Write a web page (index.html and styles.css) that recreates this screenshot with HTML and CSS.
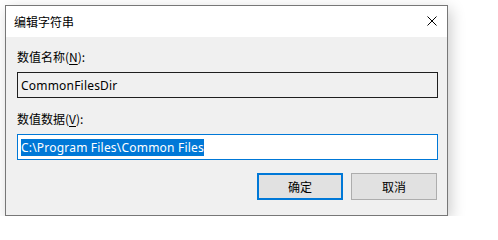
FILE: index.html
```html
<!DOCTYPE html>
<html lang="zh-CN">
<head>
<meta charset="utf-8">
<title>编辑字符串</title>
<link rel="stylesheet" href="styles.css">
</head>
<body>
<div class="dialog">
  <div class="titlebar">
    <span class="title">编辑字符串</span>
    <span class="close">
      <svg width="10" height="10" viewBox="0 0 10 10"><path d="M0.5 0.5 L9.5 9.5 M9.5 0.5 L0.5 9.5" stroke="#000" stroke-width="1" fill="none"/></svg>
    </span>
  </div>
  <div class="content">
    <div class="label">数值名称(<u>N</u>):</div>
    <div class="field readonly">CommonFilesDir</div>
    <div class="label label2">数值数据(<u>V</u>):</div>
    <div class="field focused"><span class="sel">C:\Program Files\Common Files</span></div>
    <div class="buttons">
      <div class="btn default">确定</div>
      <div class="btn">取消</div>
    </div>
  </div>
</div>
</body>
</html>
```
FILE: styles.css
```css
html, body {
  margin: 0;
  padding: 0;
  background: #ffffff;
}
body {
  font-family: "Noto Sans", "Noto Sans CJK SC", sans-serif;
  font-size: 12px;
  color: #000;
}
.dialog {
  margin: 5px 0 0 5px;
  width: 441px;
  height: 209px;
  border: 1px solid #777777;
  background: #f0f0f0;
  box-shadow: 3px 4px 14px rgba(0,0,0,0.2);
  display: flex;
  flex-direction: column;
}
.titlebar {
  height: 31px;
  background: #ffffff;
  display: flex;
  align-items: center;
  justify-content: space-between;
  padding: 0 10px 0 8px;
}
.title {
  font-family: "Noto Sans CJK SC", sans-serif;
  font-size: 12px;
  line-height: 16px;
}
.close {
  display: flex;
  width: 10px;
  height: 10px;
  margin-top: -1px;
}
.content {
  display: flex;
  flex-direction: column;
  padding: 12px 9px 0 11px;
}
.label {
  font-family: "Noto Sans CJK SC", sans-serif;
  font-size: 12px;
  line-height: 16px;
  height: 16px;
  margin-bottom: 7px;
}
.label u {
  text-decoration-thickness: 1px;
  text-underline-offset: 2px;
}
.label2 {
  margin-top: 13px;
  margin-bottom: 7px;
}
.field {
  height: 24px;
  border: 1px solid #1e1e1e;
  padding: 0 3px;
  display: flex;
  align-items: center;
  font-family: "Noto Sans", sans-serif;
  font-size: 12px;
  line-height: 17px;
  letter-spacing: 0.2px;
}
.readonly {
  background: #f0f0f0;
}
.focused {
  border-color: #0078d7;
  background: #ffffff;
}
.sel {
  background: #0078d7;
  color: #ffffff;
  line-height: 17px;
}
.buttons {
  display: flex;
  justify-content: flex-end;
  gap: 8px;
  margin-top: 13px;
  padding-right: 1px;
}
.btn {
  width: 84px;
  height: 25px;
  border: 1px solid #adadad;
  background: #e1e1e1;
  display: flex;
  align-items: center;
  justify-content: center;
  font-family: "Noto Sans CJK SC", sans-serif;
  font-size: 12px;
}
.btn.default {
  border: 2px solid #0078d7;
  width: 82px;
  height: 23px;
}
```
